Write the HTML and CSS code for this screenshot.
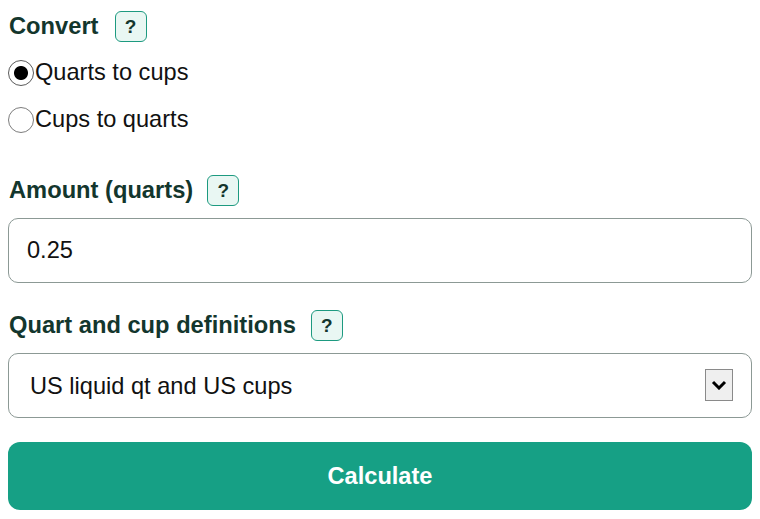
FILE: index.html
```html
<!DOCTYPE html>
<html lang="en">
<head>
    <meta charset="UTF-8">
    <meta name="viewport" content="width=device-width, initial-scale=1.0">
    <title>Quarts to Cups</title>
    <link rel="stylesheet" href="styles.css">
</head>
<body>
    <form class="calc-form" id="calcForm">
        <div class="field-title first">
            <span>Convert</span>
            <button type="button" class="help-btn">?</button>
        </div>
        <label class="radio-row">
            <input type="radio" name="direction" value="qt-cup" checked>
            <span>Quarts to cups</span>
        </label>
        <label class="radio-row">
            <input type="radio" name="direction" value="cup-qt">
            <span>Cups to quarts</span>
        </label>

        <div class="field-title amount">
            <span>Amount (quarts)</span>
            <button type="button" class="help-btn">?</button>
        </div>
        <input type="text" class="text-input" id="amount" value="0.25">

        <div class="field-title defs">
            <span>Quart and cup definitions</span>
            <button type="button" class="help-btn">?</button>
        </div>
        <div class="select-wrap">
            <select class="select-input" id="definitions">
                <option>US liquid qt and US cups</option>
                <option>US dry qt and US cups</option>
                <option>Imperial qt and imperial cups</option>
            </select>
            <span class="select-arrow">
                <svg width="16" height="10" viewBox="0 0 16 10">
                    <path d="M2 2 L8 8 L14 2" fill="none" stroke="#000" stroke-width="3"/>
                </svg>
            </span>
        </div>

        <button type="submit" class="calc-btn">Calculate</button>
    </form>
</body>
</html>
```

FILE: styles.css
```css
body {
    font-family: "Liberation Sans", Arial, sans-serif;
    background-color: #fff;
    margin: 0;
    color: #111;
}
.calc-form {
    padding: 0 8px;
    display: flex;
    flex-direction: column;
}
.field-title {
    display: flex;
    align-items: center;
    gap: 14px;
    height: 31px;
    padding-left: 1px;
    font-size: 23.7px;
    font-weight: bold;
    color: #13362d;
}
.field-title.first {
    gap: 16px;
    margin-top: 11px;
    margin-bottom: 7px;
}
.field-title.amount {
    margin-top: 32px;
    margin-bottom: 12px;
}
.field-title.defs {
    gap: 15px;
    margin-top: 27px;
    margin-bottom: 12px;
}
.help-btn {
    width: 32px;
    height: 31px;
    padding: 0;
    border: 1.5px solid #1d9a80;
    border-radius: 6px;
    background-color: #e9f7f3;
    color: #13362d;
    font-family: inherit;
    font-weight: bold;
    font-size: 19px;
    cursor: pointer;
}
.radio-row {
    display: flex;
    align-items: center;
    height: 47px;
    font-size: 23.6px;
    color: #111;
    cursor: pointer;
}
.radio-row input {
    appearance: none;
    width: 26px;
    height: 26px;
    margin: 0 1px 0 0;
    border: 1.5px solid #7d7d7d;
    border-radius: 50%;
    background-color: #fff;
}
.radio-row input:checked {
    background: radial-gradient(circle, #000 0, #000 6.5px, #fff 7.5px);
    border-color: #5a5a5a;
}
.text-input, .select-input {
    box-sizing: border-box;
    width: 100%;
    height: 65px;
    border: 1.5px solid #8c9995;
    border-radius: 10px;
    font-family: inherit;
    font-size: 23.6px;
    color: #111;
    background-color: #fff;
}
.text-input {
    padding: 0 18px;
}
.select-wrap {
    position: relative;
}
.select-input {
    appearance: none;
    padding: 0 21px;
}
.select-arrow {
    position: absolute;
    right: 19px;
    top: 16px;
    box-sizing: border-box;
    width: 28px;
    height: 32px;
    border: 1px solid #8a8a8a;
    background-color: #efefef;
    display: flex;
    align-items: center;
    justify-content: center;
    pointer-events: none;
}
.calc-btn {
    margin-top: 24px;
    height: 68px;
    border: none;
    border-radius: 12px;
    background-color: #16a085;
    color: #fff;
    font-family: inherit;
    font-size: 23.6px;
    font-weight: bold;
    cursor: pointer;
}
.calc-btn:hover {
    background-color: #138d75;
}
```
